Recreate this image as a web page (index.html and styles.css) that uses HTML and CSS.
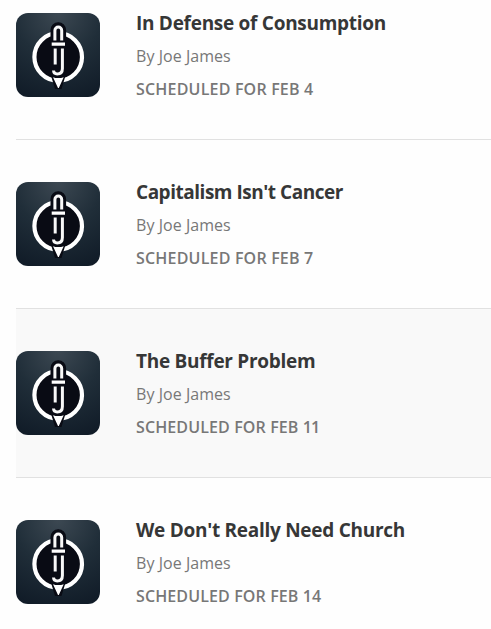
FILE: index.html
```html
<!DOCTYPE html>
<html lang="en">
<head>
<meta charset="utf-8">
<title>Scheduled posts</title>
<link rel="stylesheet" href="styles.css">
</head>
<body>
<svg class="defs" aria-hidden="true">
  <defs>
    <radialGradient id="tile" cx=".5" cy="0" r="1.05">
      <stop offset="0" stop-color="#3c4852"/>
      <stop offset=".5" stop-color="#202e39"/>
      <stop offset="1" stop-color="#111c28"/>
    </radialGradient>
    <symbol id="logo" viewBox="0 0 84 84">
      <rect width="84" height="84" fill="url(#tile)"/>
      <circle cx="42.200" cy="44" r="23.800" fill="#090b14" stroke="#fff" stroke-width="4.200"/>
      <path d="M35 30V17a7.300 7.300 0 0 1 14.600 0V30M34.500 61l4.500 15h6.500l4.500-15z" fill="#090b14"/>
      <path d="M35.500 30V17a6.800 6.800 0 0 1 13.600 0V30" fill="none" stroke="#090b14" stroke-width="2"/>
      <path d="M38.900 27.500V17.500a3.400 3.400 0 0 1 6.800 0v10M39.200 35.500V51.500M46.400 35.500V55.500c0 4-2.200 5.500-5.200 5.500-2.300 0-3.500-.8-3.700-3.500" fill="none" stroke="#f8f8f8" stroke-width="3"/>
      <path d="M35.700 29.600H49v3.100H35.700z" fill="#fff"/>
      <path d="M37 64.200c3 1.200 7.500 1.200 10.700 0L42.800 75h-.8z" fill="#fff"/>
    </symbol>
  </defs>
</svg>
<main class="posts">
  <article class="post">
    <svg class="thumb"><use href="#logo"/></svg>
    <div class="info"><h2 class="title">In Defense of Consumption</h2><p class="author">By Joe James</p><p class="status">SCHEDULED FOR FEB 4</p></div>
  </article>
  <article class="post">
    <svg class="thumb"><use href="#logo"/></svg>
    <div class="info"><h2 class="title tight">Capitalism Isn't Cancer</h2><p class="author">By Joe James</p><p class="status">SCHEDULED FOR FEB 7</p></div>
  </article>
  <article class="post active">
    <svg class="thumb"><use href="#logo"/></svg>
    <div class="info"><h2 class="title">The Buffer Problem</h2><p class="author">By Joe James</p><p class="status two-digit">SCHEDULED FOR FEB <span class="ones">11</span></p></div>
  </article>
  <article class="post">
    <svg class="thumb"><use href="#logo"/></svg>
    <div class="info"><h2 class="title">We Don't Really Need Church</h2><p class="author">By Joe James</p><p class="status two-digit">SCHEDULED FOR FEB 14</p></div>
  </article>
</main>
</body>
</html>
```
FILE: styles.css
```css
* { box-sizing: border-box; }
html, body { margin: 0; height: 629px; overflow: hidden; background: #fefefe; }
body { font-family: "Segoe UI", "Open Sans", "Noto Sans", sans-serif; }
.defs { display: block; width: 0; height: 0; }
.posts { margin: -29px 0 0 16px; }
.post { display: flex; gap: 36px; height: 169px; padding-top: 42px; border-bottom: 1px solid #e1e1e1; }
.post:last-child { border-bottom: 0; }
.active { background: #f9f9f9; }
.thumb { display: block; flex: none; width: 84px; height: 84px; border-radius: 12px; }
.info { white-space: nowrap; }
.title, .author, .status { margin: 0; }
.title { height: 26px; margin-top: -3px; font-size: 19px; font-weight: 700; line-height: 26px; letter-spacing: -.28px; color: #363737; }
.title.tight { letter-spacing: -.48px; }
.author { height: 24px; margin-top: 8px; font-size: 16px; font-weight: 400; line-height: 24px; letter-spacing: .05px; color: #777; }
.status { height: 24px; margin-top: 9px; font-size: 16px; font-weight: 600; line-height: 24px; letter-spacing: .19px; color: #777; }
.status.two-digit { letter-spacing: .12px; }
.ones { letter-spacing: -1px; }
```
